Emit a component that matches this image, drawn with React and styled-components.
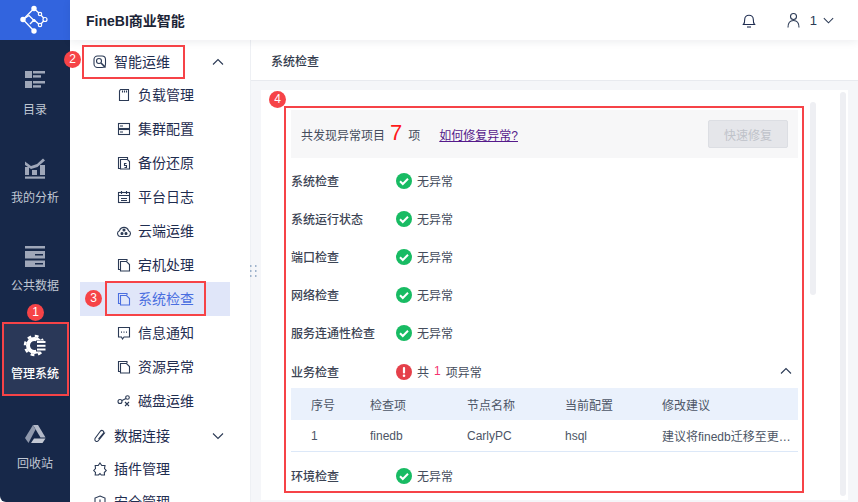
import React from "react";
import styled, { createGlobalStyle } from "styled-components";

const Global = createGlobalStyle`
  html, body { margin: 0; padding: 0; background: #fff; }
  * { box-sizing: border-box; }
  body { font-family: "Liberation Sans", "Noto Sans CJK SC", sans-serif; font-size: 12px; }
`;

const Page = styled.div`
  position: relative;
  display: flex;
  width: 858px;
  height: 502px;
  overflow: hidden;
`;

/* ---------- left rail ---------- */
const Rail = styled.aside`
  flex: 0 0 70px;
  background: #172849;
  border-bottom-left-radius: 6px;
  display: flex;
  flex-direction: column;
`;
const LogoBox = styled.div`
  height: 40px;
  background: #3264de;
  display: flex;
  align-items: center;
  justify-content: center;
`;
const RailList = styled.nav`
  padding-top: 18px;
  display: flex;
  flex-direction: column;
  gap: 15px;
  align-items: stretch;
`;
const RailItem = styled.div`
  height: 73px;
  margin: ${p => p.$top || 0}px ${p => (p.$active ? "3px" : "0")} 0;
  background: ${p => (p.$active ? "#2a3858" : "transparent")};
  color: ${p => (p.$active ? "#fff" : "#c0c7d3")};
  font-weight: ${p => (p.$active ? 500 : 400)};
  display: flex;
  flex-direction: column;
  align-items: center;
  padding-top: 11px;
  gap: 9px;
  font-size: 12px;
  line-height: 17px;
`;
const RailIcon = styled.svg`
  width: 24px;
  height: 24px;
  display: block;
  flex: none;
`;

/* ---------- main ---------- */
const Main = styled.div`
  flex: 1;
  display: flex;
  flex-direction: column;
  min-width: 0;
`;
const TopBar = styled.header`
  flex: 0 0 40px;
  display: flex;
  align-items: center;
  padding: 0 23px 0 16px;
  box-shadow: 0 2px 8px rgba(30, 40, 70, 0.08);
  position: relative;
  z-index: 1;
`;
const Brand = styled.div`
  font-size: 14px;
  font-weight: 700;
  color: #1b2436;
  flex: 1;
`;
const Bell = styled.svg`
  width: 16px;
  height: 16px;
  margin-right: 30px;
  display: block;
`;
const UserBox = styled.div`
  display: flex;
  align-items: center;
  color: #2b3a55;
  font-size: 13px;
`;
const UserGlyph = styled.svg`
  width: 13px;
  height: 16px;
  display: block;
`;
const UserNum = styled.span`
  margin: 0 5px 0 10px;
`;
const UserChev = styled.svg`
  width: 13px;
  height: 13px;
  display: block;
`;
const Body = styled.div`
  flex: 1;
  display: flex;
  min-height: 0;
`;

/* ---------- menu ---------- */
const Menu = styled.div`
  flex: 0 0 181px;
  padding: 5px 20px 0 10px;
  overflow: hidden;
  border-right: 1px solid #eef0f4;
`;
const GroupRow = styled.div`
  height: 33px;
  display: flex;
  align-items: center;
  padding-left: 13px;
  color: #1f2d50;
  font-size: 14px;
  margin-top: ${p => p.$top || 0}px;
  line-height: 20px;
`;
const GroupIcon = styled.svg`
  width: 14px;
  height: 14px;
  margin-right: 7px;
  flex: none;
`;
const Chev = styled.svg`
  width: 14px;
  height: 14px;
  margin-left: 41px;
  flex: none;
`;
const SubItem = styled.div`
  height: 34px;
  display: flex;
  align-items: center;
  padding-left: 37px;
  font-size: 14px;
  line-height: 20px;
  color: ${p => (p.$active ? "#4a6ee0" : "#1f2d50")};
  background: ${p => (p.$active ? "#e0e6f9" : "transparent")};
`;
const SubIcon = styled.svg`
  width: 14px;
  height: 14px;
  margin-right: 7px;
  flex: none;
`;

/* ---------- content ---------- */
const Content = styled.section`
  flex: 1;
  display: flex;
  flex-direction: column;
  min-width: 0;
  position: relative;
`;
const Crumb = styled.div`
  flex: 0 0 41px;
  display: flex;
  align-items: center;
  padding-left: 20px;
  border-bottom: 1px solid #e8eaef;
  color: #333c4d;
  font-weight: 500;
  font-size: 12px;
`;
const Stage = styled.div`
  flex: 1;
  background: #f5f6f9;
  padding: 9px 10px 2px;
  min-height: 0;
`;
const Panel = styled.div`
  height: 100%;
  background: #fff;
  padding: 20px 50px 0 30px;
  overflow: hidden;
`;
const Banner = styled.div`
  height: 48px;
  background: #f7f7f8;
  display: flex;
  align-items: center;
  padding: 0 10px;
  color: #444c5c;
  font-size: 12px;
`;
const BigNum = styled.span`
  color: #ff1a1a;
  font-size: 22px;
  margin: -3px 6px 0 5px;
  line-height: 1;
`;
const FixLink = styled.a`
  margin-left: 19px;
  color: #551a8b;
  text-decoration: underline;
  font-size: 12px;
`;
const FixBtn = styled.div`
  margin-left: auto;
  width: 80px;
  height: 28px;
  background: #e5e6ea;
  border: 1px solid #dcdee3;
  border-radius: 2px;
  color: #bfc2c9;
  display: flex;
  align-items: center;
  justify-content: center;
`;
const Checks = styled.div`
  padding-top: 3px;
`;
const CheckRow = styled.div`
  display: flex;
  align-items: center;
  height: ${p => p.$h || 38}px;
  padding-top: ${p => p.$pt || 0}px;
  color: #444c5c;
`;
const CheckLabel = styled.div`
  flex: 0 0 105px;
  font-weight: 500;
  color: #3c4454;
`;
const StatusIcon = styled.svg`
  width: 16px;
  height: 16px;
  margin: 1px 5px 0 0;
  flex: none;
`;
const Pink = styled.span`
  color: #f5326e;
  margin: 0 5px;
`;
const Collapse = styled.svg`
  width: 14px;
  height: 14px;
  margin-left: auto;
  margin-right: 5px;
`;
const Table = styled.div`
  color: #4c5566;
`;
const TRow = styled.div`
  display: grid;
  grid-template-columns: 79px 97px 98px 97px 131px;
  align-items: center;
  height: 32px;
  background: ${p => (p.$head ? "#eaf1fc" : "#fff")};
  border-bottom: ${p => (p.$head ? "none" : "1px solid #dce8f8")};
`;
const TCell = styled.div`
  padding-left: ${p => (p.$first ? "20px" : "0")};
  white-space: nowrap;
  overflow: hidden;
  text-overflow: ellipsis;
`;

/* ---------- overlays ---------- */
const Thumb = styled.div`
  position: absolute;
  left: ${p => p.$x}px;
  top: ${p => p.$y}px;
  width: 6px;
  height: ${p => p.$h}px;
  border-radius: 3px;
  background: #eeeff3;
`;
const Grip = styled.svg`
  position: absolute;
  left: 249px;
  top: 265px;
  width: 9px;
  height: 13px;
`;
const RedBox = styled.div`
  position: absolute;
  left: ${p => p.$x}px;
  top: ${p => p.$y}px;
  width: ${p => p.$w}px;
  height: ${p => p.$h}px;
  border: 2px solid #f64347;
  z-index: 3;
`;
const Badge = styled.div`
  position: absolute;
  left: ${p => p.$x}px;
  top: ${p => p.$y}px;
  width: 17px;
  height: 17px;
  border-radius: 50%;
  background: #f64347;
  color: #fff;
  font-size: 12px;
  line-height: 17px;
  text-align: center;
  z-index: 4;
  font-family: "Liberation Sans", sans-serif;
`;

/* ---------- icons ---------- */
const Logo = () => (
  <svg width="30" height="30" viewBox="0 0 30 30">
    <g fill="none" stroke="#fff" strokeWidth="1.3">
      <path d="M14 3.500L3 14.500l11 11.500" />
      <path d="M14 3.500l6 5.500 5 5.500-5 5.500-6-5-4 4" />
      <path d="M3 14.500l6-4 5 5" />
    </g>
    <g fill="#fff">
      <circle cx="14" cy="3.500" r="2.700" />
      <circle cx="3" cy="14.500" r="2.700" />
      <circle cx="14" cy="26" r="2.700" />
      <circle cx="14" cy="15.500" r="1.600" />
    </g>
    <g fill="#3264de" stroke="#fff" strokeWidth="1.200">
      <circle cx="25" cy="14.500" r="2" />
      <circle cx="20" cy="9" r="1.700" />
      <circle cx="20" cy="20" r="1.700" />
    </g>
  </svg>
);

const CatalogIcon = () => (
  <RailIcon viewBox="0 0 24 24">
    <g fill="#9fa7b9">
      <rect x="2" y="2" width="7" height="7" />
      <rect x="2" y="12" width="7" height="7" />
      <rect x="10" y="2" width="12" height="2.500" />
      <rect x="10" y="6.200" width="8" height="2.400" />
      <rect x="10" y="12" width="12" height="2.500" />
      <rect x="10" y="16.200" width="8" height="2.400" />
    </g>
  </RailIcon>
);
const AnalysisIcon = () => (
  <RailIcon viewBox="0 0 24 24">
    <g fill="#9fa7b9">
      <path d="M2 4.500 L8 9 L14 7 L20 1.500 L22 3.500 L14.500 10 L8 12 L2 8 Z" />
      <rect x="2" y="10" width="4" height="8" />
      <rect x="9" y="13" width="5" height="5" />
      <rect x="17" y="8" width="5" height="10" />
      <rect x="2" y="19.500" width="20" height="2.200" />
    </g>
  </RailIcon>
);
const DataIcon = () => (
  <RailIcon viewBox="0 0 24 24">
    <g fill="#9fa7b9">
      <rect x="2" y="1" width="20" height="2.500" />
      <rect x="2" y="6" width="20" height="7.500" />
      <rect x="2" y="15.500" width="20" height="6.500" />
    </g>
    <rect x="12" y="9" width="8" height="1.500" fill="#172849" />
    <rect x="12" y="18" width="8" height="1.500" fill="#172849" />
  </RailIcon>
);
const AdminIcon = () => (
  <RailIcon viewBox="0 0 24 24">
    <g fill="none" stroke="#fff">
      <circle cx="11.500" cy="12.500" r="6.500" strokeWidth="4" />
      <circle cx="11.500" cy="12.500" r="9.500" strokeWidth="2.500" strokeDasharray="3.800 3.660" />
    </g>
    <rect x="13" y="7.500" width="11" height="11" fill="#2a3858" />
    <g fill="#fff">
      <rect x="14" y="8" width="8.500" height="2" />
      <rect x="14" y="11.800" width="8.500" height="2" />
      <rect x="14" y="15.500" width="8.500" height="2" />
    </g>
  </RailIcon>
);
const BinIcon = () => (
  <RailIcon viewBox="0 0 24 24">
    <path fill="#b3b9c8" d="M10 2h5l7.500 12.500h-5z" />
    <path fill="#8f98ac" d="M10 2l2.500 4.500L5.500 20 2 15z" />
    <path fill="#c3c8d3" d="M8 20l3-4.500h11.500L19.500 20z" />
  </RailIcon>
);

const Bolt = {
  wrench: (
    <>
      <rect x="1" y="1" width="11.500" height="11.500" rx="3.500" />
      <circle cx="6" cy="6" r="2.500" />
      <path d="M8 8l4.500 4.500" strokeWidth="1.600" />
    </>
  ),
  card: <path d="M3.500 1.500h8v11h-9V3z M5.500 2.500v2 M7.500 2.500v2 M9.500 2.500v2" />,
  server: (
    <>
      <rect x="1.500" y="1.500" width="11" height="5" />
      <rect x="1.500" y="7.500" width="11" height="5" />
      <path d="M3 4h3 M3 10h3" />
    </>
  ),
  backup: (
    <>
      <path d="M3 12.500H1.500v-11h9V3" />
      <path d="M3.500 3.500h7l2 2v7.500h-9z" />
      <path d="M9.500 7.500H7.500v2h2v2h-2" />
    </>
  ),
  log: (
    <>
      <rect x="1.500" y="2.500" width="11" height="10" />
      <path d="M4.500 1v3 M9.500 1v3 M1.500 5.500h11 M4 8.500h6 M4 10.500h6" />
    </>
  ),
  cloud: (
    <>
      <path d="M3.500 12.500a3 3 0 0 1-1-5.800 4.700 4.700 0 0 1 9 0 3 3 0 0 1-1 5.800z" />
      <circle cx="7" cy="6" r="1" fill="#2b3a55" />
      <circle cx="5" cy="9.500" r="1" fill="#2b3a55" />
      <circle cx="9" cy="9.500" r="1" fill="#2b3a55" />
    </>
  ),
  doc: (
    <>
      <path d="M3 11.500H1.500v-10h8.500V3" />
      <path d="M3.500 3.500h6l3 3v6.500h-9z" />
    </>
  ),
  msg: (
    <>
      <path d="M1.500 1.500h11v9.500H7l-1.500 2-1-2h-3z" />
      <path d="M4 6.200h1 M6.500 6.200h1 M9 6.200h1" strokeWidth="1.300" />
    </>
  ),
  disk: (
    <>
      <circle cx="3" cy="7.500" r="2" />
      <circle cx="10.500" cy="3.500" r="1.800" />
      <path d="M5 6.500l4-2 M8 8l4 4 M12 8l-4 4" />
    </>
  ),
  clip: <path d="M12 3.500L5.500 11.500C4 13.500 1 12 2 9.500L7.500 2C9 .5 11.500 2 10.500 4L5.500 10" />,
  plugin: <path d="M7 1l1.800 2.500h3.200l-.5 3 1.800 2-2 2 .2 2.500h-3.200l-1.300-1.500-1.500 1.500H2.200l.3-2.500-1.800-2 1.800-2-.3-3h3z" />,
  shield: <path d="M7 1l5 2v4c0 3-2.500 5-5 6-2.500-1-5-3-5-6V3z M7 4.500v3" />
};

const Glyph = ({ name, as: Comp = SubIcon, color = "#2b3a55" }) => (
  <Comp viewBox="0 0 14 14" fill="none" stroke={color} strokeWidth="1.100">
    {Bolt[name]}
  </Comp>
);

const Up = ({ as: Comp = Chev }) => (
  <Comp viewBox="0 0 14 14" fill="none" stroke="#2b3a55" strokeWidth="1.100">
    <path d="M2 9.500l5-5 5 5" />
  </Comp>
);
const Down = ({ as: Comp = Chev }) => (
  <Comp viewBox="0 0 14 14" fill="none" stroke="#2b3a55" strokeWidth="1.100">
    <path d="M2 4.500l5 5 5-5" />
  </Comp>
);

const Ok = () => (
  <StatusIcon viewBox="0 0 16 16">
    <circle cx="8" cy="8" r="8" fill="#18bb63" />
    <path d="M4 8.200l2.800 2.800L12 5.800" fill="none" stroke="#fff" strokeWidth="2" />
  </StatusIcon>
);
const Err = () => (
  <StatusIcon viewBox="0 0 16 16">
    <circle cx="8" cy="8" r="8" fill="#e5404a" />
    <rect x="6.900" y="3" width="2.200" height="6.500" rx="1" fill="#fff" />
    <circle cx="8" cy="11.800" r="1.300" fill="#fff" />
  </StatusIcon>
);

const subs = [
  ["负载管理", "card"],
  ["集群配置", "server"],
  ["备份还原", "backup"],
  ["平台日志", "log"],
  ["云端运维", "cloud"],
  ["宕机处理", "doc"],
  ["系统检查", "doc", true],
  ["信息通知", "msg"],
  ["资源异常", "doc"],
  ["磁盘运维", "disk"]
];
const okRows = ["系统检查", "系统运行状态", "端口检查", "网络检查", "服务连通性检查"];

const Fine = () => (
  <>
    <Ok />
    无异常
  </>
);

export default function App() {
  return (
    <Page>
      <Global />
      <Rail>
        <LogoBox>
          <Logo />
        </LogoBox>
        <RailList>
          <RailItem><CatalogIcon />目录</RailItem>
          <RailItem><AnalysisIcon />我的分析</RailItem>
          <RailItem><DataIcon />公共数据</RailItem>
          <RailItem $active><AdminIcon />管理系统</RailItem>
          <RailItem $top={2}><BinIcon />回收站</RailItem>
        </RailList>
      </Rail>
      <Main>
        <TopBar>
          <Brand>FineBI商业智能</Brand>
          <Bell viewBox="0 0 16 16" fill="none" stroke="#1f2d50" strokeWidth="1.100">
            <path d="M2.500 12.500c1-1 1.200-2 1.200-5a4.300 4.300 0 0 1 8.600 0c0 3 .2 4 1.200 5z" />
            <path d="M6 15h4" />
          </Bell>
          <UserBox>
            <UserGlyph viewBox="0 0 13 16" fill="none" stroke="#2b3a55" strokeWidth="1.100">
              <circle cx="6.500" cy="4.500" r="3" />
              <path d="M1 15.500c0-4 2-7 5.500-7s5.500 3 5.500 7" />
            </UserGlyph>
            <UserNum>1</UserNum>
            <Down as={UserChev} />
          </UserBox>
        </TopBar>
        <Body>
          <Menu>
            <GroupRow>
              <Glyph name="wrench" as={GroupIcon} />
              智能运维
              <Up />
            </GroupRow>
            {subs.map(([t, i, a]) => (
              <SubItem key={t} $active={a}>
                <Glyph name={i} color={a ? "#4a6ee0" : "#2b3a55"} />
                {t}
              </SubItem>
            ))}
            <GroupRow $top={1}>
              <Glyph name="clip" as={GroupIcon} />
              数据连接
              <Down />
            </GroupRow>
            <GroupRow>
              <Glyph name="plugin" as={GroupIcon} />
              插件管理
            </GroupRow>
            <GroupRow>
              <Glyph name="shield" as={GroupIcon} />
              安全管理
            </GroupRow>
          </Menu>
          <Content>
            <Crumb>系统检查</Crumb>
            <Stage>
              <Panel>
                <Banner>
                  共发现异常项目
                  <BigNum>7</BigNum>
                  项
                  <FixLink>如何修复异常?</FixLink>
                  <FixBtn>快速修复</FixBtn>
                </Banner>
                <Checks>
                  {okRows.map(r => (
                    <CheckRow key={r}>
                      <CheckLabel>{r}</CheckLabel>
                      <Fine />
                    </CheckRow>
                  ))}
                  <CheckRow $h={37} $pt={3}>
                    <CheckLabel>业务检查</CheckLabel>
                    <Err />
                    共<Pink>1</Pink>项异常
                    <Up as={Collapse} />
                  </CheckRow>
                  <Table>
                    <TRow $head>
                      <TCell $first>序号</TCell>
                      <TCell>检查项</TCell>
                      <TCell>节点名称</TCell>
                      <TCell>当前配置</TCell>
                      <TCell>修改建议</TCell>
                    </TRow>
                    <TRow>
                      <TCell $first>1</TCell>
                      <TCell>finedb</TCell>
                      <TCell>CarlyPC</TCell>
                      <TCell>hsql</TCell>
                      <TCell>建议将finedb迁移至更稳定的数据库</TCell>
                    </TRow>
                  </Table>
                  <CheckRow $h={46}>
                    <CheckLabel>环境检查</CheckLabel>
                    <Fine />
                  </CheckRow>
                </Checks>
              </Panel>
            </Stage>
          </Content>
        </Body>
      </Main>

      <Grip viewBox="0 0 9 13" fill="#9fb3cc">
        {[0, 5, 10].map(y => (
          <React.Fragment key={y}>
            <rect x="1" y={y} width="1.500" height="2" />
            <rect x="6" y={y} width="1.500" height="2" />
          </React.Fragment>
        ))}
      </Grip>
      <Thumb $x={810} $y={102} $h={193} />
      <Thumb $x={840} $y={92} $h={404} />

      <RedBox $x={2} $y={322} $w={67} $h={74} />
      <RedBox $x={82} $y={45} $w={103} $h={34} />
      <RedBox $x={105} $y={281} $w={101} $h={35} />
      <RedBox $x={284} $y={106} $w={520} $h={387} />
      <Badge $x={27} $y={304}>1</Badge>
      <Badge $x={64} $y={51}>2</Badge>
      <Badge $x={85} $y={290}>3</Badge>
      <Badge $x={269} $y={91}>4</Badge>
    </Page>
  );
}
